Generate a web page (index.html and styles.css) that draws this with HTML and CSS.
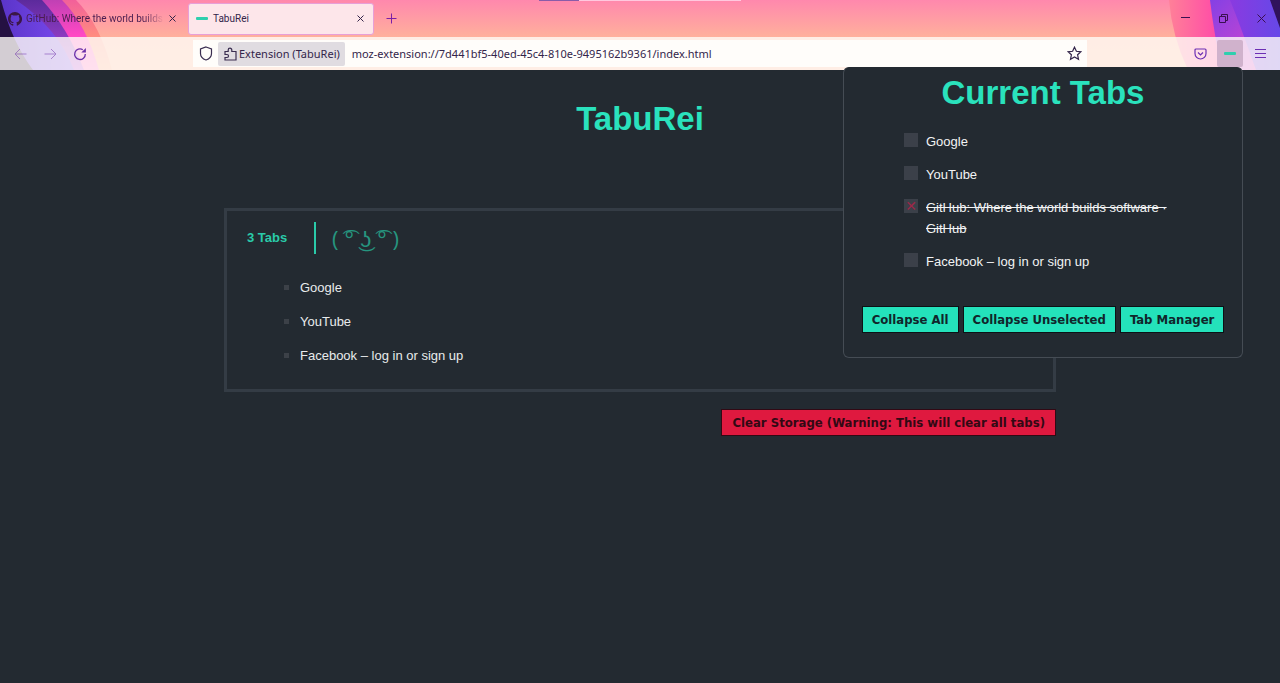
FILE: index.html
```html
<!DOCTYPE html>
<html lang="en">
<head>
<meta charset="utf-8">
<title>TabuRei</title>
<link rel="stylesheet" href="styles.css">
</head>
<body>
<header class="chrome">
  <svg class="art art-left" width="190" height="70" viewBox="0 0 190 70" aria-hidden="true">
    <defs>
      <linearGradient id="violet" x2="1" y2="0"><stop offset="0" stop-color="#5a34c8"/><stop offset="1" stop-color="#7c4cf2"/></linearGradient>
      <linearGradient id="plum" x2="0" y2="1"><stop offset="0" stop-color="#5c2a9c"/><stop offset="1" stop-color="#b84ae0"/></linearGradient>
      <linearGradient id="magenta" x2="0" y2="1"><stop offset="0" stop-color="#c040b4"/><stop offset=".5" stop-color="#ff48c4"/><stop offset="1" stop-color="#ff70c8"/></linearGradient>
      <linearGradient id="coral" x2="0" y2="1"><stop offset="0" stop-color="#f2609a"/><stop offset=".5" stop-color="#ff8a80"/><stop offset="1" stop-color="#ffa88a"/></linearGradient>
    </defs>
    <path fill="url(#coral)" d="M56 0H76Q100 24 112 70H80Z"/>
    <path fill="url(#magenta)" d="M38 0H62Q86 24 99 70H60Z"/>
    <path fill="url(#plum)" d="M14 0H42Q68 28 84 70H40Z"/>
    <path fill="url(#violet)" d="M0 0H16Q58 28 74 70H0Z"/>
    <path fill="#251142" d="M0 0H1Q12 42 33 70H0Z"/>
  </svg>
  <svg class="art art-right" width="120" height="70" viewBox="0 0 120 70" aria-hidden="true">
    <defs>
      <linearGradient id="rose"><stop offset="0" stop-color="#ff8098"/><stop offset="1" stop-color="#ff48a8"/></linearGradient>
      <linearGradient id="indigo"><stop offset="0" stop-color="#8a3ae0"/><stop offset="1" stop-color="#6648e8"/></linearGradient>
      <linearGradient id="orchid" x2="1" y2="1"><stop offset="0" stop-color="#8440e4"/><stop offset="1" stop-color="#e848c8"/></linearGradient>
    </defs>
    <path fill="url(#rose)" d="M9 0H60V70H28Q12 36 9 0Z"/>
    <path fill="url(#orchid)" d="M50 0H120V70H62Q54 34 50 0Z"/>
    <path fill="url(#indigo)" d="M70 0H120V70H96Q82 30 70 0Z"/>
    <path fill="#30135c" d="M110 0H120V28Z"/>
  </svg>
  <div class="marker" aria-hidden="true"><span class="marker-on"></span></div>
  <div class="tabstrip">
    <div class="tab">
      <svg width="14" height="14" viewBox="0 0 16 16" aria-hidden="true"><path fill="#3b1746" d="M8 0C3.58 0 0 3.58 0 8c0 3.54 2.29 6.53 5.47 7.59.4.07.55-.17.55-.38v-1.490c-2.010.37-2.530-.49-2.690-.94-.09-.23-.48-.94-.82-1.130-.28-.15-.68-.52-.01-.53.63-.01 1.080.58 1.230.82.72 1.210 1.870.87 2.330.66.07-.52.28-.87.51-1.070-1.780-.2-3.640-.89-3.640-3.950 0-.87.31-1.590.82-2.150-.08-.2-.36-1.020.08-2.120 0 0 .67-.21 2.200.82a7.600 7.600 0 0 1 4 0c1.530-1.040 2.200-.82 2.200-.82.44 1.100.16 1.920.08 2.120.51.56.82 1.270.82 2.150 0 3.070-1.870 3.750-3.650 3.950.29.25.54.73.54 1.480v2.200c0 .21.15.46.55.38A8 8 0 0 0 8 0Z"/></svg>
      <span class="tab-title tab-fade">GitHub: Where the world builds</span>
      <button class="icon-btn tab-close" aria-label="Close GitHub tab"><svg width="7" height="7" viewBox="0 0 7 7"><path d="M0.500 0.500l6 6M6.500 0.500l-6 6"/></svg></button>
    </div>
    <div class="tab tab-active">
      <span class="dash"></span>
      <span class="tab-title">TabuRei</span>
      <button class="icon-btn tab-close" aria-label="Close TabuRei tab"><svg width="7" height="7" viewBox="0 0 7 7"><path d="M0.500 0.500l6 6M6.500 0.500l-6 6"/></svg></button>
    </div>
    <button class="icon-btn new-tab" aria-label="New tab"><svg width="11" height="11" viewBox="0 0 11 11"><path d="M5.500 0.500v10M0.500 5.500h10"/></svg></button>
    <div class="window-buttons">
      <button class="icon-btn" aria-label="Minimize"><svg width="9" height="9" viewBox="0 0 9 9"><path d="M0 3.500h9"/></svg></button>
      <button class="icon-btn" aria-label="Restore"><svg width="9" height="9" viewBox="0 0 9 9"><path d="M.5 2.500h6v6h-6zM2.500 2.500v-2h6v6h-2"/></svg></button>
      <button class="icon-btn" aria-label="Close window"><svg width="9" height="9" viewBox="0 0 9 9"><path d="M0.500 0.500l8 8M8.500 0.500l-8 8"/></svg></button>
    </div>
  </div>
  <div class="toolbar">
    <div class="nav">
      <button class="icon-btn nav-dim" aria-label="Back"><svg width="13" height="12" viewBox="0 0 13 12"><path d="M12.500 6H1M6 1L1 6l5 5"/></svg></button>
      <button class="icon-btn nav-dim" aria-label="Forward"><svg width="13" height="12" viewBox="0 0 13 12"><path d="M.5 6H12M7 1l5 5-5 5"/></svg></button>
      <button class="icon-btn" aria-label="Reload"><svg width="14" height="14" viewBox="0 0 14 14"><path stroke-width="1.300" d="M9.800 2.700A5.300 5.300 0 1 0 12.300 7"/><path fill="currentColor" stroke="none" d="M12.900 1V5.600H8.300Z"/></svg></button>
    </div>
    <div class="urlbar">
      <svg class="line" width="14" height="15" viewBox="0 0 14 15" aria-hidden="true"><path stroke-width="1.200" d="M7 1L12.500 3V7.500C12.500 10.500 10 13 7 14 4 13 1.500 10.500 1.500 7.500V3Z"/></svg>
      <span class="origin"><svg class="line" width="13" height="14" viewBox="0 0 13 14" aria-hidden="true"><path stroke-width="1.200" d="M1 7.500V4.500h3.200V3a1.800 1.800 0 0 1 3.600 0v1.500H12V13H1V10.500h2a1.500 1.500 0 0 0 0-3H1Z"/></svg>Extension (TabuRei)</span>
      <input class="url" aria-label="Address" value="moz-extension://7d441bf5-40ed-45c4-810e-9495162b9361/index.html">
      <button class="icon-btn star" aria-label="Bookmark"><svg width="15" height="15" viewBox="0 0 15 15"><path stroke-width="1.200" d="M7.500 1.200l1.900 4.100 4.500.5-3.300 3 .9 4.500-4-2.300-4 2.300.9-4.500-3.300-3 4.500-.5z"/></svg></button>
    </div>
    <div class="tools">
      <button class="icon-btn" aria-label="Pocket"><svg width="13" height="12" viewBox="0 0 13 12"><path stroke-width="1.200" d="M2 1h9a1 1 0 0 1 1 1v3.500a5.500 5.500 0 0 1-11 0V2a1 1 0 0 1 1-1zM4 4.500L6.500 7 9 4.500"/></svg></button>
      <button class="icon-btn ext-btn" aria-label="TabuRei"><span class="dash"></span></button>
      <button class="icon-btn" aria-label="Menu"><svg width="11" height="9" viewBox="0 0 11 9"><path d="M0 .5h11M0 4.500h11M0 8.500h11"/></svg></button>
    </div>
  </div>
</header>

<main class="page">
  <h1 class="title">TabuRei</h1>
  <section class="group">
    <div class="group-head">
      <h2 class="count">3 Tabs</h2>
      <span class="face">( ͡° ͜ʖ ͡° )</span>
    </div>
    <ul class="links">
      <li><a href="#google">Google</a></li>
      <li><a href="#youtube">YouTube</a></li>
      <li><a href="#facebook">Facebook – log in or sign up</a></li>
    </ul>
  </section>
  <button class="btn btn-danger">Clear Storage (Warning: This will clear all tabs)</button>
</main>

<aside class="popup">
  <h1 class="popup-title">Current Tabs</h1>
  <div class="choices">
    <label class="choice"><input type="checkbox"><span>Google</span></label>
    <label class="choice"><input type="checkbox"><span>YouTube</span></label>
    <label class="choice"><input type="checkbox" checked><span>GitHub: Where the world builds software · GitHub</span></label>
    <label class="choice"><input type="checkbox"><span>Facebook – log in or sign up</span></label>
  </div>
  <div class="actions">
    <button class="btn">Collapse All</button>
    <button class="btn">Collapse Unselected</button>
    <button class="btn">Tab Manager</button>
  </div>
</aside>
</body>
</html>
```
FILE: styles.css
```css
* { box-sizing: border-box; }
body {
  margin: 0;
  min-height: 100vh;
  background: #232a31;
  color: #e8eaec;
  font-family: "Liberation Sans", Arial, sans-serif;
  font-size: 13px;
}
a { color: inherit; text-decoration: none; }
button { font: inherit; cursor: pointer; }

.chrome {
  position: relative;
  height: 70px;
  background: linear-gradient(#ff88ad 0, #ffb09c 37px, #ffb59c 100%);
  color: #33254a;
  font-family: "Noto Sans", sans-serif;
  font-size: 11px;
}
.art { position: absolute; top: 0; }
.art-left { left: 0; }
.art-right { right: 0; }
.marker {
  position: absolute;
  top: 0;
  left: 539px;
  width: 202px;
  height: 1px;
  background: #ffc8de;
}
.marker-on { display: block; width: 40px; height: 1px; background: #8a5ca8; }
.icon-btn {
  display: flex;
  align-items: center;
  justify-content: center;
  padding: 0;
  border: 0;
  background: none;
  color: inherit;
}
.icon-btn svg, .line { fill: none; stroke: currentColor; flex: none; }
.dash { width: 12px; height: 3px; border-radius: 1px; background: #2fcfae; flex: none; }

.tabstrip { position: relative; display: flex; align-items: center; height: 37px; }
.tab {
  display: flex;
  align-items: center;
  gap: 4px;
  width: 188px;
  height: 32px;
  padding: 0 11px 0 8px;
  font-family: Roboto, sans-serif;
  font-size: 10px;
}
.tab-active {
  gap: 5px;
  width: 186px;
  padding: 0 8px 0 7px;
  background: #fde6ea;
  border: 1px solid #e79fd8;
  border-radius: 3px;
}
.tab-title { flex: 1; white-space: nowrap; }
.tab-fade {
  color: #4a1c50;
  mask-image: linear-gradient(to right, #000 85%, transparent);
}
.tab-close { width: 9px; height: 16px; }
.new-tab { width: 34px; height: 32px; color: #7a1fa8; }
.window-buttons { display: flex; margin-left: auto; color: #3a1050; }
.window-buttons .icon-btn { width: 38px; height: 32px; }

.toolbar {
  position: relative;
  display: flex;
  align-items: center;
  height: 33px;
  background: rgba(255, 252, 248, 0.8);
}
.nav { display: flex; width: 193px; padding-left: 5px; }
.nav .icon-btn { width: 30px; height: 28px; color: #6c2fa8; }
.nav .nav-dim { opacity: 0.5; }
.urlbar {
  display: flex;
  align-items: center;
  flex: 1;
  height: 27px;
  padding: 0 5px 0 6px;
  gap: 5px;
  background: #fffdfa;
}
.origin {
  display: flex;
  align-items: center;
  gap: 2px;
  height: 24px;
  padding: 0 5px 0 6px;
  border-radius: 2px;
  background: #e0dce1;
  white-space: nowrap;
}
.url {
  flex: 1;
  min-width: 0;
  padding: 0 2px;
  border: 0;
  background: none;
  color: inherit;
  font: inherit;
}
.tools { display: flex; justify-content: flex-end; width: 193px; padding-right: 4px; color: #6c2fb4; }
.tools .icon-btn { width: 32px; height: 27px; color: #6c2fb4; }
.tools .ext-btn { width: 26px; margin: 0 1px; border-radius: 2px; background: #d0b2cc; }
.line { color: #3a2d50; }

.page {
  display: flex;
  flex-direction: column;
  width: 65%;
  margin: 0 auto;
}
.title, .popup-title { margin: 0; color: #2ae2bd; font-size: 33px; line-height: 40px; text-align: center; }
.title { padding: 29px 0 69px; }
.group { border: 3px solid #343c45; padding: 11px 20px 11px; }
.group-head { display: flex; align-items: center; }
.count {
  width: 69px;
  margin: 0;
  border-right: 2px solid #2acaa9;
  color: #2acaa9;
  font-size: 13px;
  line-height: 32px;
}
.face {
  padding-left: 16px;
  color: #26957f;
  font-family: "Open Sans", sans-serif;
  font-size: 22px;
  font-weight: 400;
  line-height: 32px;
}
.links {
  margin: 22px 0 0;
  padding-left: 53px;
  list-style: square;
  line-height: 21px;
}
.links li { padding: 0 0 12px; }
.links li::marker { color: #3c4148; font-size: 15px; }
.btn {
  padding: 0 9px;
  border: 1px solid #0c1216;
  background: #24e2bb;
  color: #10262b;
  font-family: "DejaVu Sans Condensed", Tahoma, sans-serif;
  font-size: 13px;
  font-weight: 700;
  line-height: 25px;
  white-space: nowrap;
}
.btn-danger {
  align-self: flex-end;
  padding: 0 10px;
  margin: 17px 0 24px;
  border-color: #320914;
  background: #df193f;
  color: #320914;
}

.popup {
  position: absolute;
  top: 67px;
  right: 37px;
  width: 400px;
  padding: 5px 17px 24px;
  border: 1px solid #454c54;
  border-top-color: #232a31;
  border-radius: 6px;
  background: #232a31;
}
.choices {
  display: flex;
  flex-direction: column;
  gap: 12px;
  padding: 18px 50px 34px 43px;
  line-height: 21px;
}
.choice { display: flex; gap: 8px; color: #f2f3f4; }
.choice input {
  appearance: none;
  flex: none;
  display: grid;
  place-items: center;
  width: 14px;
  height: 14px;
  margin: 2px 0 0;
  background: #3b4049;
}
.choice input:checked::before { content: "✕"; color: #9c2748; font: 14px/14px "DejaVu Sans", sans-serif; }
.choice input:checked + span { text-decoration: line-through; }
.actions { display: flex; justify-content: center; gap: 4px; }
```
